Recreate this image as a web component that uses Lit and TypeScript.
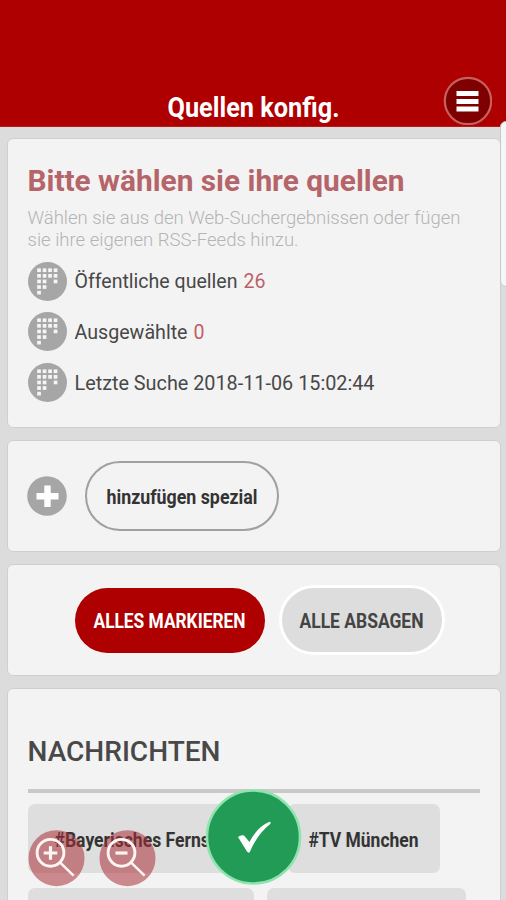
import { LitElement, html, svg, css } from "lit";
import { customElement } from "lit/decorators.js";

/** One line of text, set to a fixed measure. */
const line = (text: string, cls: string, width: number, height: number, base: number) => html`
  <svg class="line ${cls}" width=${width} height=${height}>
    <text x="-0.5" y=${base} textLength=${width} lengthAdjust="spacingAndGlyphs">${text}</text>
  </svg>`;

const DOTS = [
  [0, 0], [1, 0], [2, 0], [3, 0],
  [0, 1], [1, 1], [2, 1], [3, 1],
  [0, 2], [1, 2], [3, 2],
  [0, 3], [1, 3],
  [0, 4],
];

const sourceIcon = () => html`
  <svg class="icon" width="39" height="39" viewBox="0 0 39 39">
    <circle cx="19.5" cy="19.5" r="19.5" fill="#a6a6a6" />
    ${DOTS.map(([c, r]) => svg`<rect x=${9.2 + c * 5.5} y=${6.4 + r * 5.6} width="3.7" height="3.7" fill="#f5f5f5" />`)}
  </svg>`;

const magnifier = (plus: boolean) => html`
  <svg class="zoom" width="57" height="57" viewBox="0 0 57 57">
    <circle cx="28.5" cy="28.2" r="28" fill="#a82f37" fill-opacity=".54" />
    <g fill="none" stroke="#fff5f3" stroke-width="2.9">
      <circle cx="22.5" cy="22.8" r="13.4" />
      <path stroke-width="2.5" d="M32.2 32.6L45.6 45.7" />
      <path stroke-width="3.2" d=${plus ? "M15.7 23H29.3M22.500 16.200V29.800" : "M16.500 23H28.500"} />
    </g>
  </svg>`;

@customElement("app-root")
export class AppRoot extends LitElement {
  static styles = css`
    :host {
      display: block;
      position: relative;
      height: 900px;
      overflow: hidden;
      background: #dcdcdc;
      font-family: Roboto, "Liberation Sans", sans-serif;
    }
    * { box-sizing: border-box; }
    svg { display: block; flex: none; }
    .line { overflow: visible; }
    header {
      height: 127px;
      background: #ae0000;
      display: grid;
      grid-template-columns: 168px 1fr 49px;
      padding-right: 14px;
      border-bottom: 1px solid #b8191a;
    }
    .title { fill: #fff; font-size: 28px; font-weight: 700; margin-top: 90px; }
    .menu { margin-top: 76px; }
    main {
      display: flex;
      flex-direction: column;
      gap: 12px;
      padding: 11px 5px 0 7px;
    }
    .card {
      background: #f3f3f3;
      border: 1px solid #cfcfcf;
      border-radius: 6px;
      padding: 0 20px;
      flex: none;
    }
    .intro { height: 290px; padding-top: 22px; }
    .add { height: 112px; display: flex; align-items: center; gap: 18px; padding-left: 19px; }
    .pick { height: 112px; display: flex; align-items: center; gap: 14px; padding-left: 67px; }
    .news { height: 240px; padding-top: 42px; }
    .heading { fill: #b5656a; font-size: 29.2px; font-weight: 700; }
    .hint { fill: #b4b4b4; font-size: 18.8px; font-weight: 300; }
    .rows { display: flex; flex-direction: column; gap: 11.7px; margin-top: 12.7px; }
    .row { display: flex; align-items: center; gap: 8px; height: 39px; }
    .row .value { margin-left: -2px; }
    .label { fill: #484848; font-size: 20px; }
    .value { fill: #bd5f67; font-size: 20px; }
    .pill {
      display: flex;
      align-items: center;
      justify-content: center;
      border-radius: 35px;
      height: 70px;
    }
    .outline { width: 194px; border: 2.5px solid #a0a0a0; }
    .primary { width: 190px; height: 65px; background: #ae0000; }
    .muted { width: 166px; background: #ddd; border: 3px solid #fff; }
    .small { font-size: 20px; font-weight: 700; fill: #333; }
    .primary .small { fill: #fff; }
    .muted .small { fill: #444; }
    .section { fill: #484848; font-size: 28px; font-weight: 500; }
    .rule { height: 4px; width: 452px; background: #c9c9c9; margin-top: 22px; }
    .chips { display: flex; gap: 13px; margin-top: 11px; }
    .chips + .chips { margin-top: 15px; }
    .chip {
      height: 69px;
      border-radius: 7px;
      background: #dedede;
      display: flex;
      align-items: center;
      justify-content: center;
      flex: none;
    }
    .c1 { width: 247px; }
    .c2 { width: 152px; }
    .c3 { width: 226px; }
    .c4 { width: 199px; }
    .scroll {
      position: absolute;
      right: -8px;
      top: 121px;
      width: 14px;
      height: 166px;
      border-radius: 6px;
      background: #f6f6f6;
      border: 1px solid #c9c9c9;
    }
    .zooms { position: absolute; left: 28px; bottom: 13px; display: flex; gap: 14px; }
    .ok { position: absolute; left: 204.5px; bottom: 14px; }
  `;

  render() {
    return html`
      <header>
        <span></span>
        ${line("Quellen konfig.", "title", 172, 34, 27)}
        <svg class="menu" width="49" height="49" viewBox="0 0 49 49">
          <circle cx="25" cy="25" r="23.2" fill="#7e0000" stroke="#c5605c" stroke-width="2.2" />
          <path d="M13.500 17.600H35.500M13.500 25.400H35.500M13.500 33H35.500" stroke="#fff" stroke-width="5" />
        </svg>
      </header>
      <main>
        <section class="card intro">
          ${line("Bitte wählen sie ihre quellen", "heading", 377, 38, 29.5)}
          ${line("Wählen sie aus den Web-Suchergebnissen oder fügen", "hint", 433, 22, 24.5)}
          ${line("sie ihre eigenen RSS-Feeds hinzu.", "hint", 271, 28, 24.5)}
          <div class="rows">
            <div class="row">
              ${sourceIcon()}${line("Öffentliche quellen", "label", 163, 24, 19.2)}
              ${line("26", "value", 22, 24, 19.2)}
            </div>
            <div class="row">
              ${sourceIcon()}${line("Ausgewählte", "label", 113, 24, 19.2)}
              ${line("0", "value", 11, 24, 19.2)}
            </div>
            <div class="row">
              ${sourceIcon()}${line("Letzte Suche 2018-11-06 15:02:44", "label", 300, 24, 19.2)}
            </div>
          </div>
        </section>
        <section class="card add">
          <svg width="40" height="40" viewBox="0 0 40 40">
            <circle cx="20" cy="20" r="19.8" fill="#a6a6a6" />
            <path d="M9.5 20.3H31.5M20.5 9.5V31" stroke="#fff" stroke-width="6.4" />
          </svg>
          <div class="pill outline">${line("hinzufügen spezial", "small", 151, 24, 20)}</div>
        </section>
        <section class="card pick">
          <div class="pill primary">${line("ALLES MARKIEREN", "small", 152, 24, 19.7)}</div>
          <div class="pill muted">${line("ALLE ABSAGEN", "small", 124, 24, 19.7)}</div>
        </section>
        <section class="card news">
          ${line("NACHRICHTEN", "section", 193, 36, 29.7)}
          <div class="rule"></div>
          <div class="chips">
            <div class="chip c1">${line("#Bayerisches Fernsehen", "small", 194, 24, 19.7)}</div>
            <div class="chip c2">${line("#TV München", "small", 110, 24, 19.7)}</div>
          </div>
          <div class="chips">
            <div class="chip c3"></div>
            <div class="chip c4"></div>
          </div>
        </section>
      </main>
      <div class="scroll"></div>
      <div class="zooms">${magnifier(true)}${magnifier(false)}</div>
      <svg class="ok" width="97" height="98" viewBox="0 0 97 98">
        <circle cx="48.5" cy="49" r="46.5" fill="#229b57" stroke="#8fe3ae" stroke-width="2.6" />
        <path fill="#fff" d="M33 49Q36 46.500 39 47.500L44.500 54Q52 39 64.500 33.800Q66.500 34 65.200 36Q52.500 46 44.800 64Q43.500 65.500 42 63.500Z" />
      </svg>
    `;
  }
}
